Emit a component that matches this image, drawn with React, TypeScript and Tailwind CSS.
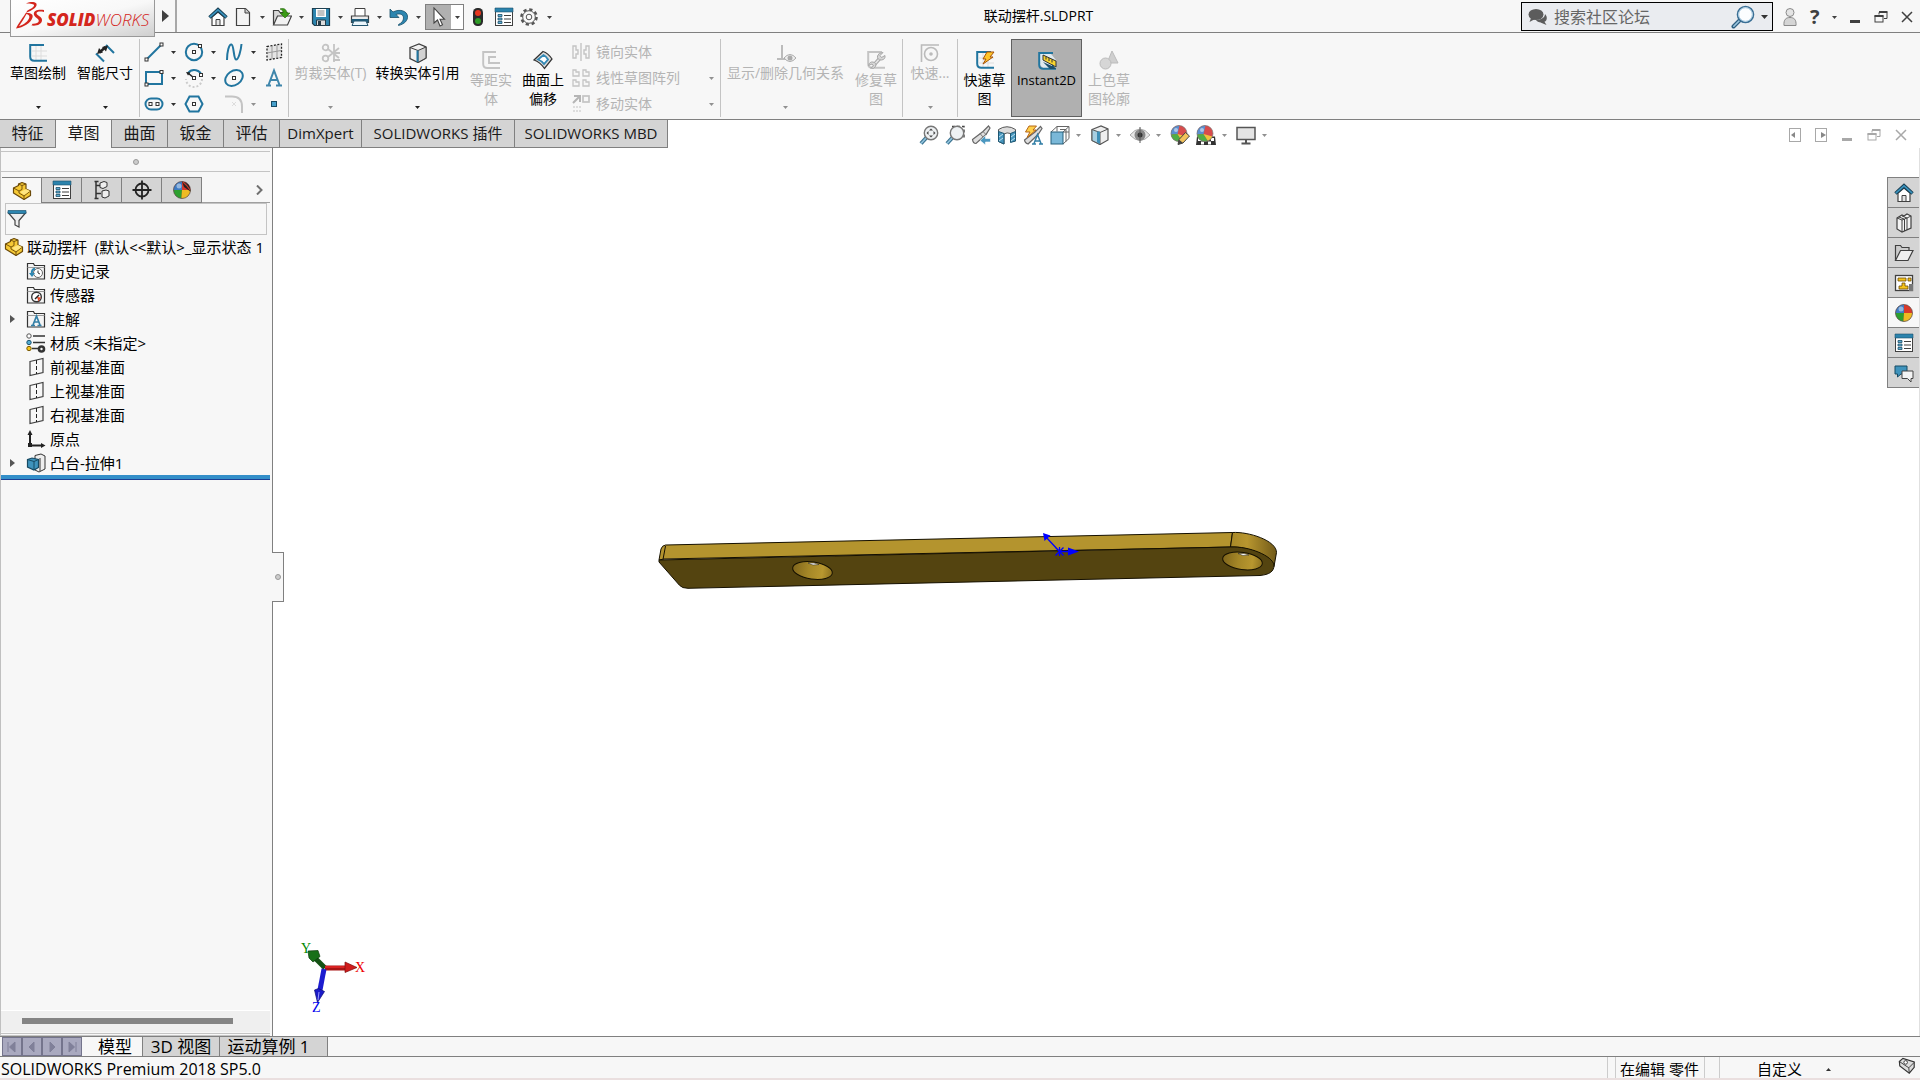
import type { ReactNode } from "react";
import clsx from "clsx";

const BLUE = "#21759f";
const INK = "#404040";
const FADED = "#c4c4c4";

function Icon({ children, className }: { children: ReactNode; className?: string }) {
  return (
    <svg viewBox="0 0 20 20" fill="none" aria-hidden="true" className={clsx("size-5 shrink-0", className)}>
      {children}
    </svg>
  );
}

function Caret({ className = "text-[#404040]" }: { className?: string }) {
  return (
    <svg viewBox="0 0 5 3" fill="currentColor" aria-hidden="true" className={clsx("h-[3px] w-[5px] shrink-0", className)}>
      <path d="M0 0h5L2.500 3z" />
    </svg>
  );
}

/* ---------- shared icons ---------- */

const HomeIcon = () => (
  <Icon>
    <path d="M4 10v8.500h12V10l-6-5z" fill="#fff" stroke={INK} strokeWidth="1.200" />
    <path d="M8 18v-5.500h4V18" fill="#e4e4e4" stroke={INK} />
    <path d="M1.500 10.500L10 2.800l8.500 7.700" stroke="#183e52" strokeWidth="3.600" />
    <path d="M1.800 10.200L10 2.800l8.200 7.400" stroke="#3a93be" strokeWidth="1.600" />
  </Icon>
);

const ListIcon = () => (
  <Icon>
    <rect x="1.500" y="1.500" width="17" height="17" fill="#fff" stroke={INK} />
    <path d="M1 1h18v4H1z" fill="#2b83ad" stroke="#1d4f69" strokeWidth=".6" />
    <path d="M4 7.500h4v2H4zM4 11h4v2H4zM4 14.500h4v2H4z" fill="#5fb0d4" stroke="#1d4f69" strokeWidth=".8" />
    <path d="M10 8.500h7M10 12h7M10 15.500h7" stroke={INK} strokeWidth="1.200" />
  </Icon>
);

const Ball = () => (
  <>
    <circle cx="10" cy="10" r="8.500" fill="#d93a2b" />
    <path d="M10 10V1.500A8.500 8.500 0 0 0 1.500 10z" fill="#3e7cc4" />
    <path d="M10 10H1.500a8.500 8.500 0 0 0 8 8.500z" fill="#2da02f" />
    <path d="M10 10l-.5 8.500a8.500 8.500 0 0 0 9-8.500z" fill="#eebb22" />
    <circle cx="7" cy="6" r="2.500" fill="#fff" opacity=".45" />
    <circle cx="10" cy="10" r="8.500" stroke="#555" strokeWidth=".7" />
  </>
);

/* Same sphere with the larger coloured sectors used in the view toolbar */
const ViewBall = () => (
  <>
    <circle cx="9" cy="8.500" r="8" fill="#d84c4c" />
    <path d="M9.500.5A8 8 0 0 0 1 9.500l6.500-.5z" fill="#5a8fd0" />
    <path d="M1 9.500a8 8 0 0 0 11 6.500L7.500 9z" fill="#4fae45" />
    <path d="M7.500 9l4.500 7q3.500-1.500 4.500-4.500z" fill="#eec53c" />
    <circle cx="6" cy="5" r="2" fill="#fff" opacity=".5" />
    <circle cx="9" cy="8.500" r="8" stroke="#777" strokeWidth=".7" />
  </>
);

const PartIcon = () => (
  <Icon>
    <path d="M1.500 7l5-2.500V3l3.500-1.500 4 1.500v5l4.500 2v4.500l-6.500 4L1.500 12z" fill="#f6c935" stroke="#6b4a09" strokeWidth="1.200" strokeLinejoin="round" />
    <path d="M1.500 7L7 10l3-1.500V4.500L6.500 3M10 4.500L14 3M7 10v2l5 3 6.500-5M12 15v3.500" stroke="#6b4a09" strokeWidth=".9" />
    <path d="M8 11l3-1.500 3-1.500 4 2-6 4z" fill="#ffe681" />
  </Icon>
);

const RestoreIcon = () => (
  <svg viewBox="0 0 14 12" fill="none" stroke="currentColor" aria-hidden="true" className="h-3 w-3.5">
    <path d="M5 3.500V1.500h8v6h-3" />
    <path d="M5 1h8.500" strokeWidth="2" />
    <rect x="1" y="5" width="8" height="6" />
    <path d="M.5 5h9" strokeWidth="2" />
  </svg>
);
const MinimizeIcon = () => (
  <svg viewBox="0 0 12 12" fill="currentColor" aria-hidden="true" className="size-3"><path d="M1 9h10v3H1z" /></svg>
);
const CloseIcon = () => (
  <svg viewBox="0 0 12 12" stroke="currentColor" strokeWidth="1.500" aria-hidden="true" className="size-3"><path d="M1 1l10 10M11 1L1 11" /></svg>
);

/* ---------- title bar ---------- */

function Logo() {
  return (
    <div className="relative z-10 ml-2.5 flex h-[37px] w-[145px] shrink-0 items-start border border-t-0 border-[#999] bg-gradient-to-br from-white via-[#f8f8f8] to-[#cfcfcf] pl-1">
      <svg viewBox="0 0 32 30" fill="#d4261d" aria-hidden="true" className="h-[30px] w-8 shrink-0">
        <path d="M11 3.500C17 1 22.500 2 21.500 5.500 20.500 9 14 11.500 10.500 13c5-.5 8 1 7 4.500C16 23 8 27.500 1 28.500 3 24 8 17.500 12.500 10.500c3-1.500 6-3 6.500-4.700.5-2-3.500-2.300-8-2.300zM11.500 14C9.500 18 6.500 22.500 4 26.200c5-1.500 9.500-5.200 10.300-8.700.4-2-.8-3-2.800-3.500z" />
        <path d="M29 12c-4-.8-7.500-.5-7.500 1.300 0 2.400 6 3.200 5.500 7.200-.5 3.800-5 5.700-10.500 5l1-1.800c3 .2 6-.5 6.300-2.700.3-2.500-5-3.500-5-7.200 0-3.600 5-4.800 10.200-3.800z" />
      </svg>
      <span className="mt-2.5 font-['Open_Sans','Noto_Sans',sans-serif] text-[17px] leading-5 text-[#d4261d] italic">
        <b className="font-extrabold">SOLID</b>
        <span className="font-light">WORKS</span>
      </span>
    </div>
  );
}

const quickTools: { label: string; caret?: boolean; width: string; icon: ReactNode }[] = [
  { label: "主页", width: "w-[25px]", icon: <HomeIcon /> },
  {
    label: "新建", caret: true, width: "w-[39px]",
    icon: (
      <Icon>
        <path d="M3.500 1.500h9l4 4v13h-13z" fill="#f4f4f4" stroke={INK} strokeWidth="1.200" />
        <path d="M12 1.500V6h4.500" fill="#ccc" stroke={INK} />
      </Icon>
    ),
  },
  {
    label: "打开", caret: true, width: "w-[39px]",
    icon: (
      <Icon>
        <path d="M1.500 17.500V3.500h5l1.500 2h7v4" fill="#d8d8d8" stroke={INK} strokeWidth="1.200" />
        <path d="M1.500 18l4-9h14l-4 9z" fill="#f2f2f2" stroke={INK} strokeWidth="1.200" />
        <path d="M8 2c4-1.500 6.500.5 7 4h3l-5 5-5-5h3c0-2-1-3.500-3-4z" fill="#3a9a15" stroke="#226109" strokeWidth=".6" />
      </Icon>
    ),
  },
  {
    label: "保存", caret: true, width: "w-[39px]",
    icon: (
      <Icon>
        <path d="M1.500 1.500h17v17H3.500l-2-2z" fill="#2d86b0" stroke="#1e3f50" strokeWidth="1.200" />
        <path d="M5 2h10v8H5z" fill="#fff" />
        <path d="M6.500 4h7M6.500 6h7M6.500 8h7" stroke="#888" />
        <path d="M5.500 13h9v5.500h-9z" fill="#ddd" stroke="#263d49" />
        <path d="M7 14h3v4.500H7z" fill="#263d49" />
      </Icon>
    ),
  },
  {
    label: "打印", caret: true, width: "w-[39px]",
    icon: (
      <Icon>
        <path d="M5 9V1.500h10V9" fill="#fff" stroke={INK} />
        <path d="M1.500 9h17v6.500h-17z" fill="#ececec" stroke={INK} strokeWidth="1.200" />
        <path d="M1.500 12h17v3.500h-17z" fill="#1f5c7b" />
        <path d="M4 14h12l2 4.500H2z" fill="#eaf5fb" stroke="#23556e" />
      </Icon>
    ),
  },
  {
    label: "撤销", caret: true, width: "w-[39px]",
    icon: (
      <Icon>
        <path d="M1 2v8.500h9L7 7.500c4-1.500 7.500 0 7.500 3.500 0 3-2 5-5 6.500v1c6-1.500 9.500-5 9-9.500C17.800 4 11 1.500 4 5z" fill="#2d86b0" stroke="#1b506b" strokeWidth=".8" />
      </Icon>
    ),
  },
];

function TitleBar() {
  return (
    <header className="flex h-[33px] shrink-0 items-start border-b border-[#808080] bg-[#f7f7f7]">
      <Logo />
      <button aria-label="展开菜单" className="flex h-8 w-[22px] items-center justify-center border-r-2 border-[#a8a8a8]">
        <svg viewBox="0 0 7 12" fill="#404040" aria-hidden="true" className="h-3 w-[7px]"><path d="M0 0l7 6-7 6z" /></svg>
      </button>
      <nav aria-label="快速访问" className="flex h-8 items-center pt-0.5 pl-[31px]">
        {quickTools.map((tool) => (
          <button key={tool.label} aria-label={tool.label} className={clsx("flex items-center gap-1.5", tool.width)}>
            {tool.icon}
            {tool.caret && <span className="pl-px"><Caret /></span>}
          </button>
        ))}
        <button aria-label="选择" className="-ml-[3px] flex h-[26px] w-[39px] items-stretch border border-[#808080] bg-white">
          <span className="flex w-[25px] items-center justify-center bg-[#b0b0b0]">
            <Icon>
              <path d="M5 1v15l3.500-3 2.500 6 2.500-1.200-2.500-5.500h4.500z" fill="#fff" stroke="#444" strokeWidth="1.100" />
            </Icon>
          </span>
          <span className="flex flex-1 items-center justify-center"><Caret /></span>
        </button>
        <button aria-label="重建模型" className="ml-1 w-[23px]">
          <Icon>
            <rect x="5" y="1" width="10" height="18" rx="4.500" fill="#2b2b2b" />
            <circle cx="10" cy="6" r="3" fill="#e8371f" />
            <circle cx="10" cy="14" r="3" fill="#2f9c27" />
          </Icon>
        </button>
        <button aria-label="文件属性" className="ml-[3px] w-[25px]"><ListIcon /></button>
        <button aria-label="选项" className="flex items-center gap-2">
          <Icon>
            <circle cx="10" cy="10" r="7.500" stroke="#555" strokeWidth="2.600" strokeDasharray="3.200 2.690" />
            <circle cx="10" cy="10" r="6.300" fill="#fafafa" stroke="#555" />
            <circle cx="10" cy="10" r="2.800" stroke="#555" />
          </Icon>
          <Caret />
        </button>
      </nav>
      <h1 className="flex-1 pl-1 text-center text-sm leading-8 text-black">联动摆杆.SLDPRT</h1>
      <div className="mt-0.5 flex h-[29px] w-[252px] items-center border border-black bg-[#eaecf0] px-1.5">
        <Icon>
          <ellipse cx="8" cy="7.500" rx="7.500" ry="5.500" fill="#5c5c5c" />
          <path d="M3 11l-1.500 4L7 12zM16 14l2.500 4-6-2.500z" fill="#5c5c5c" />
          <path d="M17 7c3 3 2.500 8-3 8.500-3 .2-5-.8-6-2.500 5 0 9-2.500 9-6z" fill="#5c5c5c" />
        </Icon>
        <input
          aria-label="搜索社区论坛"
          placeholder="搜索社区论坛"
          className="ml-1.5 w-0 flex-1 bg-transparent text-base leading-5 outline-none placeholder:text-[#666]"
        />
        <button aria-label="搜索" className="flex items-center gap-1.5">
          <svg viewBox="0 0 24 24" fill="none" aria-hidden="true" className="size-6">
            <path d="M9.500 14.500L2.500 21.500" stroke="#2f5f80" strokeWidth="4" strokeLinecap="round" />
            <path d="M9 15L2.800 21.200" stroke="#9cc7e0" strokeWidth="1.600" strokeLinecap="round" />
            <circle cx="14.500" cy="9.500" r="8" fill="#fbfdff" stroke="#3a6f95" strokeWidth="1.600" />
            <circle cx="14.500" cy="9.500" r="6.800" stroke="#a9cbe2" />
          </svg>
          <svg viewBox="0 0 7 4" fill="#333" aria-hidden="true" className="-mr-0.5 h-1 w-[7px]"><path d="M0 0h7L3.500 4z" /></svg>
        </button>
      </div>
      <div className="flex h-8 w-[147px] items-center pt-0.5 pl-[7px] text-[#404040]">
        <button aria-label="登录">
          <Icon>
            <path d="M4 18.500c-.5-6 2-8 6-8s6.500 2 6 8z" fill="#d5d5d5" stroke="#8a8a8a" />
            <circle cx="10" cy="5.500" r="4" fill="#e4e4e4" stroke="#8a8a8a" />
          </Icon>
        </button>
        <button aria-label="帮助" className="ml-2.5 flex items-center gap-3 text-xl leading-6 font-bold">
          ?<Caret />
        </button>
        <button aria-label="最小化" className="ml-auto"><MinimizeIcon /></button>
        <button aria-label="还原" className="ml-[13px]"><RestoreIcon /></button>
        <button aria-label="关闭" className="mr-[7px] ml-[13px]"><CloseIcon /></button>
      </div>
    </header>
  );
}

/* ---------- command ribbon ---------- */

const SketchFrame = ({ color = BLUE }: { color?: string }) => (
  <path d="M16 2H2.200v11.800q0 4 4 4H19" stroke={color} strokeWidth="2" />
);

const Handle = ({ x, y }: { x: number; y: number }) => (
  <rect x={x - 1.500} y={y - 1.500} width="3" height="3" fill="#fff" stroke="#333" />
);

type RibbonButtonProps = {
  icon: ReactNode;
  lines: string[];
  width: string;
  caret?: boolean;
  disabled?: boolean;
  pressed?: boolean;
};

function RibbonButton({ icon, lines, width, caret, disabled, pressed }: RibbonButtonProps) {
  return (
    <button
      disabled={disabled}
      aria-pressed={pressed}
      className={clsx(
        "flex h-[78px] shrink-0 flex-col items-center leading-[19px] whitespace-nowrap",
        width,
        caret ? "pt-1" : "pt-[11px]",
        disabled ? "text-[#b4b4b4]" : "text-black",
        pressed ? "border border-[#606060] bg-[#b0b0b0] text-[13px]" : "text-sm",
      )}
    >
      {icon}
      <span>{lines.map((line) => <span key={line} className="block">{line}</span>)}</span>
      {caret && <span className="mt-auto mb-2"><Caret className={disabled ? "text-[#909090]" : "text-[#202020]"} /></span>}
    </button>
  );
}

const Divider = () => <div className="h-[78px] w-px shrink-0 bg-[#c4c4c4]" />;

const sketchTools: { label: string; caret?: boolean; faded?: boolean; art: ReactNode }[] = [
  { label: "直线", caret: true, art: <><path d="M2 18L18 2" stroke={BLUE} strokeWidth="2" /><Handle x={2.500} y={17.500} /><Handle x={17.500} y={2.500} /></> },
  { label: "圆", caret: true, art: <><circle cx="10" cy="10" r="8.200" stroke={BLUE} strokeWidth="2" /><Handle x={10} y={10} /><Handle x={16} y={4} /></> },
  { label: "样条曲线", caret: true, art: <path d="M3 18C3 10 5 2 7.500 2.500S9.500 17 12 17.500 17 8 17.500 2" stroke={BLUE} strokeWidth="2" /> },
  { label: "基准面", art: <><path d="M3 4.500L17.500 2v13.500L3 18z" fill="#e4e4e4" stroke="#222" strokeWidth="1.300" strokeDasharray="2 1.500" /><path d="M8 4v13M13 3v13M3 11l14-2.500" stroke="#999" /></> },
  { label: "边角矩形", caret: true, art: <><rect x="2" y="4" width="16" height="12" stroke={BLUE} strokeWidth="2" /><Handle x={2.500} y={16.500} /><Handle x={17.500} y={4} /></> },
  { label: "圆弧", caret: true, art: <><path d="M4 5a8 8 0 0 1 14 3" stroke={BLUE} strokeWidth="2" /><path d="M18 11a8 8 0 0 1-16 0" stroke="#ccc" strokeWidth="2" strokeDasharray="2 2" /><path d="M4 5l6 5" stroke="#222" strokeWidth="1.500" /><path d="M2 4l4.500.5L4 7.500z" fill="#222" /><Handle x={10} y={10} /><Handle x={17} y={7} /></> },
  { label: "椭圆", caret: true, art: <><ellipse cx="10" cy="10" rx="9.500" ry="7" transform="rotate(-35 10 10)" stroke={BLUE} strokeWidth="2" /><Handle x={10} y={10} /></> },
  { label: "文字", art: <path d="M2 17.500h5M12 17.500h6M4.500 17L10 2.500 15.500 17M6.500 12h7" stroke="#3f86ab" strokeWidth="2" /> },
  { label: "直槽口", caret: true, art: <><rect x="1.500" y="4.500" width="17" height="11" rx="5.500" stroke={BLUE} strokeWidth="2" /><Handle x={6.500} y={10} /><Handle x={13.500} y={10} /></> },
  { label: "多边形", art: <><path d="M5.500 2.500h9L18.500 10l-4 7.500h-9L1.500 10z" stroke={BLUE} strokeWidth="2" /><Handle x={10} y={10} /></> },
  { label: "绘制圆角", caret: true, faded: true, art: <><path d="M1 2.500h7q10 0 10 10V19" stroke={FADED} strokeWidth="2" /><path d="M8 8l4 4M12 8l-4 4" stroke="#ddd" /></> },
  { label: "点", art: <rect x="7.500" y="7.500" width="5" height="5" fill="#47a0cc" stroke="#174a63" /> },
];

const entityTools: { label: string; caret?: boolean; art: ReactNode }[] = [
  { label: "镜向实体", art: <path d="M10 1v18M2 4h3v4h2v4H5v4H2zM18 4h-3v4h-2v4h2v4h3z" stroke={FADED} strokeWidth="1.400" /> },
  { label: "线性草图阵列", caret: true, art: <path d="M2 2h3v2h3v4H2zM12 2h3v2h3v4h-6zM2 12h3v2h3v4H2zM12 12h3v2h3v4h-6z" stroke={FADED} strokeWidth="1.300" /> },
  { label: "移动实体", caret: true, art: <><rect x="12" y="2" width="6" height="6" stroke={FADED} strokeWidth="1.700" /><path d="M2 9l6-6M3 2h6v6" stroke="#b5b5b5" strokeWidth="2" /><path d="M2 13h8M2 17h8" stroke="#ddd" strokeWidth="2" strokeDasharray="2 1" /></> },
];

function Ribbon() {
  return (
    <section aria-label="草图命令" className="flex h-[87px] shrink-0 items-start border-b border-[#808080] bg-[#f7f7f7] pt-1.5">
      <RibbonButton
        caret width="w-[76px]" lines={["草图绘制"]}
        icon={<Icon><path d="M8 3v14M13 3v14M4 8h15M4 13h15" stroke="#ddd" /><SketchFrame /></Icon>}
      />
      <RibbonButton
        caret width="w-[58px] mr-[5px]" lines={["智能尺寸"]}
        icon={
          <Icon>
            <path d="M1 10.500l8 8M11 2l8 8" stroke={BLUE} strokeWidth="2" />
            <path d="M4.500 9.500L10.500 4" stroke="#222" strokeWidth="2.500" />
            <path d="M2 11l2-6 4 4.500zM13 2.500l-2 6L7 4z" fill="#222" />
          </Icon>
        }
      />
      <Divider />
      <div className="grid w-[148px] shrink-0 grid-cols-[40px_40px_40px_28px] grid-rows-[26px_26px_26px] pl-1">
        {sketchTools.map((tool) => (
          <button key={tool.label} aria-label={tool.label} disabled={tool.faded} className="flex items-center gap-[7px]">
            <Icon>{tool.art}</Icon>
            {tool.caret && <Caret className={tool.faded ? "text-[#909090]" : "text-[#303030]"} />}
          </button>
        ))}
      </div>
      <Divider />
      <RibbonButton
        caret disabled width="w-[83px]" lines={["剪裁实体(T)"]}
        icon={
          <Icon>
            <circle cx="4.500" cy="4.500" r="2.800" stroke={FADED} strokeWidth="1.800" />
            <circle cx="4.500" cy="15.500" r="2.800" stroke={FADED} strokeWidth="1.800" />
            <path d="M7 6l11 9M7 14l11-9M13 1v18M12 10h7M12 17h7" stroke={FADED} strokeWidth="1.800" />
          </Icon>
        }
      />
      <RibbonButton
        caret width="w-[91px]" lines={["转换实体引用"]}
        icon={
          <Icon>
            <path d="M2 4.500L11 1l7 3v11l-8 4.500-8-4z" fill="#f2f2f2" stroke={INK} strokeWidth="1.300" />
            <path d="M10 7.500L18 4v11l-8 4.500z" fill="#d2d2d2" stroke={INK} />
            <path d="M2 4.500l8 3" stroke={INK} />
            <path d="M9.500 7.500v11.500" stroke={BLUE} strokeWidth="2" />
          </Icon>
        }
      />
      <RibbonButton
        disabled width="w-14" lines={["等距实", "体"]}
        icon={<Icon><path d="M15 2H2.200v12q0 4 4 4H19M15 7H8v6h11" stroke={FADED} strokeWidth="1.900" /></Icon>}
      />
      <RibbonButton
        width="w-12" lines={["曲面上", "偏移"]}
        icon={
          <Icon>
            <path d="M1 10L10 1.500Q15 3 19 9l-7.500 9.500Q7 12 1 10z" fill="#dcdcdc" stroke="#333" strokeWidth="1.300" />
            <path d="M5 9.500l5.500-4.500q3 1.500 4.500 4.500l-4 4.500Q9 11 5 9.500z" fill="#fff" stroke="#3388b4" strokeWidth="1.800" />
          </Icon>
        }
      />
      <div className="grid w-[153px] shrink-0 grid-rows-[26px_26px_26px] pr-1.5 pl-1 text-sm text-[#b4b4b4]">
        {entityTools.map((tool) => (
          <button key={tool.label} disabled className="flex items-center">
            <Icon>{tool.art}</Icon>
            <span className="ml-[5px] flex-1 text-left">{tool.label}</span>
            {tool.caret && <Caret className="text-[#909090]" />}
          </button>
        ))}
      </div>
      <Divider />
      <RibbonButton
        caret disabled width="w-[129px]" lines={["显示/删除几何关系"]}
        icon={
          <Icon>
            <path d="M6 2v14M1 16h9" stroke="#bbb" strokeWidth="2" />
            <path d="M8 15q6-7 12 0-6 7-12 0z" fill="#f0f0f0" stroke="#aaa" />
            <circle cx="14" cy="15" r="2.500" fill="#aaa" />
          </Icon>
        }
      />
      <RibbonButton
        disabled width="w-[52px]" lines={["修复草", "图"]}
        icon={
          <Icon>
            <SketchFrame color={FADED} />
            <path d="M7.500 15.500L15 7" stroke="#a8a8a8" strokeWidth="3.600" />
            <path d="M7.500 15.500L15 7" stroke="#e6e6e6" strokeWidth="1.600" />
            <path d="M17 2.500l-3 3 1.500 2 3.500-2q.5 4-3.500 4.500-4.500 0-4-4 .8-3.500 5.500-3.500zM4.500 18l3-2-1.500-2-3.500 1.500q1-4 4.500-3.500 4 1 2.500 4.500-1.500 3-5 1.500z" fill="#d6d6d6" stroke="#a8a8a8" />
          </Icon>
        }
      />
      <Divider />
      <RibbonButton
        caret disabled width="w-[54px]" lines={["快速..."]}
        icon={<Icon><path d="M1.500 19V2H19" stroke="#bbb" strokeWidth="1.600" /><circle cx="11" cy="11" r="6.500" stroke="#bbb" strokeWidth="1.600" /><circle cx="11" cy="11" r="1.800" fill="#bbb" /></Icon>}
      />
      <Divider />
      <RibbonButton
        width="w-[53px]" lines={["快速草", "图"]}
        icon={
          <Icon>
            <path d="M8 3v14M13 3v14M4 8h15M4 13h15" stroke="#ddd" /><SketchFrame />
            <path d="M12 2h7l-4 5h3L8 14l3-5H8z" fill="#ffc629" stroke="#a65208" />
          </Icon>
        }
      />
      <RibbonButton
        pressed width="w-[71px]" lines={["Instant2D"]}
        icon={
          <Icon>
            <path d="M3 3h11l5 6v8H6l-3-3z" fill="#dfeaf0" />
            <SketchFrame />
            <path d="M6 4l13 6v6L6 9z" fill="#f9d52e" stroke="#333" />
            <path d="M9 5.500v3M12 7v3M15 8.500v3" stroke="#333" />
            <path d="M6 11l9 4v-2l4 5H13z" fill="#1c4f6b" />
          </Icon>
        }
      />
      <RibbonButton
        disabled width="w-[54px]" lines={["上色草", "图轮廓"]}
        icon={<Icon><path d="M13 1l6 12H8z" fill="#cfcfcf" stroke="#bbb" /><circle cx="6.500" cy="13.500" r="5.500" fill="#d6d6d6" stroke="#bbb" /></Icon>}
      />
    </section>
  );
}

/* ---------- command tabs and view toolbar ---------- */

const commandTabs = [
  { label: "特征", width: "w-14 text-base" },
  { label: "草图", width: "w-14 text-base" },
  { label: "曲面", width: "w-14 text-base" },
  { label: "钣金", width: "w-14 text-base" },
  { label: "评估", width: "w-14 text-base" },
  { label: "DimXpert", width: "w-[82px] text-[15px]" },
  { label: "SOLIDWORKS 插件", width: "w-[153px] text-[15px]" },
  { label: "SOLIDWORKS MBD", width: "w-[153px] text-[15px]" },
];

const Lens = () => (
  <>
    <path d="M8 12l-6 6.500" stroke="#39718e" strokeWidth="4" />
    <path d="M7.500 12.500L2 18.500" stroke="#8fc3de" strokeWidth="1.800" />
    <circle cx="12" cy="8" r="6.700" fill="#eef1f3" stroke="#777" strokeWidth="1.400" />
  </>
);

const viewTools: { label: string; width: string; caret?: boolean; icon: ReactNode }[] = [
  { label: "整屏显示全图", width: "w-[26px]", icon: <Icon><Lens /><path d="M12 3.500l2 2h-4zM12 12.500l2-2h-4zM7.500 8l2-2v4zM16.500 8l-2-2v4z" fill="#444" /></Icon> },
  { label: "局部放大", width: "w-[26px]", icon: <Icon><path d="M7 1.500h12v13" stroke="#444" strokeWidth="1.400" strokeDasharray="3 2" /><Lens /></Icon> },
  { label: "上一视图", width: "w-[26px]", icon: <Icon><path d="M1.500 14.500L12 6.500l5.500-5.500L19 3l-4 6.500L5 18.500q-3 0-3.500-4z" fill="#dedede" stroke="#666" strokeWidth="1.200" /><path d="M12 6.500l3 3M9 8.500l3 3.500" stroke="#777" /><path d="M19.500 13.500h-5v-3L9 15.500l5.500 4.500v-3h5z" fill="#4c98c0" stroke="#fff" strokeWidth=".6" /></Icon> },
  { label: "剖面视图", width: "w-[26px]", icon: <Icon><path d="M1.500 4.500q8.500-5.500 17 0V16l-5 .5V8.500Q10 7 7 9v10l-5.500-2.500z" fill="#dcdcdc" stroke="#555" /><path d="M1.500 6.500L7 8.500V19l-5.500-2.500zM13.500 8.500l5-2V16l-5 1.500z" fill="#4696bd" stroke="#1d5672" /><path d="M2 12l4-3M2 16l4-3M14 12l4-3M14 16l4-3" stroke="#bfe0ef" /></Icon> },
  { label: "动态注解视图", width: "w-[27px]", icon: <Icon><path d="M1.500 15L12 7l5.500-5.500L19 3.500l-4 6L5 19q-3-.5-3.500-4z" fill="#dedede" stroke="#666" strokeWidth="1.200" /><path d="M6 1h7.500L10 5h3l-9 7.500 3-5.500H2.500z" fill="#ffd04a" stroke="#b56617" /><path d="M9 19h4M16 19h4M11 18.500l3.500-9 3.500 9M12 16h5" stroke="#337fa6" strokeWidth="1.500" /></Icon> },
  { label: "视图定向", width: "w-10", caret: true, icon: <Icon><path d="M1 7l6-5.500h12v12L13 19M7 1.500v5M13 7l6-5.500M7 7v12M13 7h6M10 4.500h6v12" stroke="#666" /><rect x="1" y="7" width="12" height="12" fill="#7ab8d8" stroke="#27607d" /></Icon> },
  { label: "显示样式", width: "w-10", caret: true, icon: <Icon><path d="M2 4.500L11 1l7 3v11l-8 4.500-8-4z" fill="#eee" stroke="#555" strokeWidth="1.200" /><path d="M2 4.500l8 3v12l-8-4z" fill="#a7cfe2" stroke="#555" /><path d="M7 6.500h3V19l-3-1.500z" fill="#3e8fb7" /><path d="M10 7.500L18 4" stroke="#555" /></Icon> },
  { label: "隐藏/显示项目", width: "w-10", caret: true, icon: <Icon><path d="M0 10q10-12 20 0-10 11-20 0z" fill="#e8e8e8" stroke="#aaa" /><circle cx="10" cy="10" r="5.500" fill="#888" /><circle cx="10" cy="10" r="2.500" fill="#333" /><path d="M10 2v16" stroke="#555" /></Icon> },
  { label: "编辑外观", width: "w-[26px]", icon: <Icon><ViewBall /><path d="M8 19.500l1-5L15.500 7.500l4 3.500-6.500 7z" fill="#f2c25b" stroke="#444" /><path d="M8 19.500l1-5 4 3.500z" fill="#444" /></Icon> },
  { label: "应用布景", width: "w-10", caret: true, icon: <Icon><path d="M1 11.500h18l1 8.500H0z" fill="#333" /><path d="M2 13h3v3H2zM15 13h3v3h-3zM5 16.500h3v3H5zM12 16.500h3v3h-3z" fill="#fff" /><ViewBall /></Icon> },
  { label: "视图设定", width: "w-7", caret: true, icon: <Icon><rect x="1" y="2.500" width="18" height="12" fill="#e4e4e4" stroke="#555" strokeWidth="1.500" /><path d="M10 15v3M5.500 18.500h9" stroke="#555" strokeWidth="2" /></Icon> },
];

function CommandTabs() {
  return (
    <div className="flex h-7 shrink-0 bg-white">
      <div role="tablist" aria-label="命令管理器" className="flex shrink-0">
        {commandTabs.map((tab) => (
          <button
            key={tab.label}
            role="tab"
            aria-selected={tab.label === "草图"}
            className={clsx(
              "border-r border-[#808080] pb-0.5 leading-6 whitespace-nowrap text-[#1a1a1a]",
              tab.width,
              tab.label === "草图" ? "bg-[#f7f7f7]" : "border-b bg-[#d4d4d4]",
            )}
          >
            {tab.label}
          </button>
        ))}
      </div>
      <div className="ml-[251px] flex shrink-0 items-center pt-0.5">
        {viewTools.map((tool) => (
          <button key={tool.label} aria-label={tool.label} className={clsx("flex shrink-0 items-center gap-1.5", tool.width)}>
            {tool.icon}
            {tool.caret && <Caret className="text-[#909090]" />}
          </button>
        ))}
      </div>
      <div className="mr-[13px] ml-auto flex items-center gap-3.5 pt-0.5 text-[#a8a8a8]">
        <button aria-label="向左展开">
          <svg viewBox="0 0 12 14" fill="none" stroke="currentColor" aria-hidden="true" className="h-3.5 w-3"><rect x=".5" y=".5" width="11" height="13" /><path d="M6 4v6L2 7z" fill="#888" stroke="none" /></svg>
        </button>
        <button aria-label="向右展开">
          <svg viewBox="0 0 12 14" fill="none" stroke="currentColor" aria-hidden="true" className="h-3.5 w-3"><rect x=".5" y=".5" width="11" height="13" /><path d="M6 4v6l5-3z" fill="#888" stroke="none" /></svg>
        </button>
        <button aria-label="最小化文档"><MinimizeIcon /></button>
        <button aria-label="还原文档"><RestoreIcon /></button>
        <button aria-label="关闭文档"><CloseIcon /></button>
      </div>
    </div>
  );
}

/* ---------- feature tree ---------- */

const TreeFolder = ({ children }: { children: ReactNode }) => (
  <Icon>
    <path d="M1.500 18V2.500h6l1 2h10V18z" fill="#f4f4f4" stroke="#333" strokeWidth="1.200" />
    <path d="M1.500 6.500h17" stroke="#999" />
    {children}
  </Icon>
);

const PlaneIcon = () => (
  <Icon><path d="M4 4.500l13-3v14l-13 3z" stroke={INK} strokeWidth="1.200" /><path d="M10.500 3v14" stroke="#222" strokeDasharray="4 2" /></Icon>
);

const treeItems: { label: string; expandable?: boolean; icon: ReactNode }[] = [
  { label: "历史记录", icon: <TreeFolder><circle cx="12" cy="12" r="4.500" fill="#fff" stroke="#666" /><path d="M12 9.500V12l2 1" stroke="#333" /><path d="M9 7.500q-4 1.500-3 5.500" stroke="#2d86b0" strokeWidth="2" /><path d="M3 12h6l-3 4z" fill="#2d86b0" /></TreeFolder> },
  { label: "传感器", icon: <TreeFolder><circle cx="10.500" cy="12" r="4.800" fill="#fff" stroke="#333" strokeWidth="1.400" /><path d="M11 12l4 .5-2.500 4z" fill="#e64422" /><path d="M9 14l4-4" stroke="#222" strokeWidth="1.500" /></TreeFolder> },
  { label: "注解", expandable: true, icon: <TreeFolder><path d="M5 16.500h4M11.500 16.500h4M7 16l3.500-9L14 16M8 13h5" stroke="#337fa6" strokeWidth="1.700" /></TreeFolder> },
  { label: "材质 <未指定>", icon: <Icon><path d="M7 3h12M7 9.500h12M6 15.500h7" stroke="#333" strokeWidth="1.700" /><circle cx="3" cy="3" r="2.200" fill="#fff" stroke="#555" /><circle cx="3" cy="9.500" r="2.200" fill="#53abd3" stroke="#1d5672" /><circle cx="3" cy="15.500" r="2.200" fill="#f6c419" stroke="#7a5a05" /><circle cx="15.500" cy="16" r="2.500" stroke="#333" strokeWidth="2.600" /></Icon> },
  { label: "前视基准面", icon: <PlaneIcon /> },
  { label: "上视基准面", icon: <PlaneIcon /> },
  { label: "右视基准面", icon: <PlaneIcon /> },
  { label: "原点", icon: <Icon><path d="M4 4v12.500h12" stroke="#222" strokeWidth="2" /><path d="M4 1l2.500 5h-5zM19.500 16.500L15 14v5z" fill="#222" /><path d="M2 14h4v4H2z" fill="#222" /></Icon> },
  { label: "凸台-拉伸1", expandable: true, icon: <Icon><path d="M9 2.500l6-1.500 4 2v13l-6 3-4-2z" fill="#eee" stroke="#333" /><path d="M14 5v13" stroke="#333" /><path d="M1.500 6.500L6 5l6.500 1.500v8L8 17l-6.500-3z" fill="#3f93bc" stroke="#174a63" strokeWidth="1.200" /><path d="M1.500 6.500L8 8.500l4.500-2M8 8.500V17" stroke="#174a63" /></Icon> },
];

const managerTabs: { label: string; icon: ReactNode }[] = [
  { label: "特征管理器设计树", icon: <PartIcon /> },
  { label: "属性管理器", icon: <ListIcon /> },
  { label: "配置管理器", icon: <Icon><path d="M4 1.500v17M4 5.500h5M4 13.500h5M2.500 1.500h4M2.500 18.500h4" stroke="#333" strokeWidth="1.500" /><path d="M8 3l4-1.500 3 1v4l-4 2-3-1zM10 11l4-1 3 1v5l-4 2-3-1z" fill="#eee" stroke="#333" /></Icon> },
  { label: "尺寸专家管理器", icon: <Icon><circle cx="10" cy="10" r="6.500" stroke="#222" strokeWidth="1.800" /><path d="M10 .5v19M.5 10h19" stroke="#222" strokeWidth="1.800" /></Icon> },
  { label: "外观管理器", icon: <Icon><Ball /><path d="M10 1.500q8 1 8.500 10L12 7z" fill="#222" /><path d="M11 2q4 3 7 8" stroke="#c83a2b" strokeWidth="1.200" /></Icon> },
];

function FeaturePanel() {
  return (
    <aside className="flex w-[273px] shrink-0 flex-col border-r border-l border-r-[#808080] border-l-[#c0c0c0] bg-[#f7f7f7] pr-0.5">
      <div className="mt-[3px] flex h-[21px] shrink-0 items-center justify-center border-y border-[#c4c4c4]">
        <span className="size-1.5 rounded-full border border-[#999] bg-[#ccc]" />
      </div>
      <div role="tablist" aria-label="管理器" className="mt-[5px] flex h-[26px] shrink-0 pl-px">
        {managerTabs.map((tab, index) => (
          <button
            key={tab.label}
            role="tab"
            aria-label={tab.label}
            aria-selected={index === 0}
            className={clsx(
              "flex w-10 items-center justify-center border-t border-r border-[#808080]",
              index > 0 && "border-b bg-[#d4d4d4]",
            )}
          >
            {tab.icon}
          </button>
        ))}
        <button aria-label="更多管理器" className="flex flex-1 items-center justify-end border-b border-[#a0a0a0] pr-[7px]">
          <svg viewBox="0 0 7 10" fill="none" stroke="#707070" strokeWidth="2" aria-hidden="true" className="h-2.5 w-[7px]"><path d="M1 .5L5.500 5 1 9.500" /></svg>
        </button>
      </div>
      <label className="mr-[3px] ml-1 flex h-8 shrink-0 items-center border border-[#c4c4c4] pl-px">
        <Icon>
          <path d="M1.500 4h17L12 11.500V18l-4-2v-4.500z" fill="#eee" stroke="#444" strokeWidth="1.200" />
          <path d="M1 1.500h18v3H1z" fill="#2d86b0" stroke="#1d5672" strokeWidth=".7" />
        </Icon>
        <input aria-label="过滤设计树" className="w-0 flex-1 bg-transparent text-[15px] outline-none" />
      </label>
      <div className="flex h-6 shrink-0 items-center overflow-hidden pl-[3px] text-[15px] whitespace-pre text-black">
        <PartIcon />
        <span className="ml-[3px]">{"联动摆杆  (默认<<默认>_显示状态 1"}</span>
      </div>
      <ul className="text-[15px] leading-6 text-black">
        {treeItems.map((item) => (
          <li key={item.label} className="flex h-6 items-center">
            <span className="flex w-[25px] justify-start pl-[9px]">
              {item.expandable && (
                <svg viewBox="0 0 5 8" fill="#555" aria-hidden="true" className="h-2 w-[5px]"><path d="M0 0l5 4-5 4z" /></svg>
              )}
            </span>
            {item.icon}
            <span className="ml-1">{item.label}</span>
          </li>
        ))}
      </ul>
      <div className="h-[5px] shrink-0 border-b border-[#1c3f94] bg-[#338fc9]" />
      <div className="mt-auto h-[22px] shrink-0 border-t border-white bg-[#efefef] pt-[7px]">
        <div className="mr-[37px] ml-[21px] h-1.5 bg-[#848484]" />
      </div>
      <div className="mt-px h-[3px] shrink-0 border-y border-[#c4c4c4]" />
    </aside>
  );
}

/* ---------- graphics area ---------- */

function PartModel() {
  return (
    <svg viewBox="650 520 640 80" role="img" aria-label="联动摆杆模型" className="absolute top-[372px] left-[377px] h-20 w-[640px]">
      <defs>
        <linearGradient id="round-end" x1="1231" x2="1277" y1="0" y2="0" gradientUnits="userSpaceOnUse">
          <stop offset="0" stopColor="#a88928" />
          <stop offset=".35" stopColor="#b8962f" />
          <stop offset="1" stopColor="#705918" />
        </linearGradient>
        <linearGradient id="bore">
          <stop offset="0" stopColor="#80661c" />
          <stop offset=".4" stopColor="#a58727" />
          <stop offset=".75" stopColor="#b8972f" />
          <stop offset="1" stopColor="#8d711f" />
        </linearGradient>
      </defs>
      <g stroke="#151000" strokeLinejoin="round">
        <path d="M659 560l2-11q1-3.500 4.500-4L1232.500 532.500 1230.500 547 664 559z" fill="#b4942e" />
        <path d="M1232.500 532.500c16-1 44 8 44 20l-2.500 14c-5-12-27-20-43.500-19.500z" fill="url(#round-end)" />
        <path d="M659 560L1230.500 547c19-1 42 9 43.500 18 0 7-5 9.500-14 10.500L688 588.300q-6 0-8.500-3L659 562z" fill="#544410" />
        <path d="M665.500 546l-2.500 13.500" />
        <ellipse cx="812.500" cy="570.500" rx="20" ry="8.500" transform="rotate(8 812.500 570.500)" fill="url(#bore)" />
        <ellipse cx="1242.500" cy="561" rx="20" ry="8.500" transform="rotate(8 1242.500 561)" fill="url(#bore)" />
      </g>
      <path d="M808 563h6l5 1.500-6 .5zM1238 553.500h6l5 1.500-6 .5z" fill="#fff" stroke="#222" strokeWidth=".5" />
      <path d="M1045 536l14.500 15.500H1070M1055.500 547.500l8 8M1063.500 547.500l-8 8M1059.500 547v9" fill="none" stroke="#00f" strokeWidth="1.300" />
      <path d="M1043 533l7.500 2.500-6 5.500zM1079 551.500l-11-4v8z" fill="#00f" />
    </svg>
  );
}

function AxisTriad() {
  return (
    <svg viewBox="300 938 70 80" role="img" aria-label="坐标轴" className="absolute bottom-[18px] left-[27px] h-20 w-[70px]">
      <path d="M325 968l-10-10" stroke="#145214" strokeWidth="5" />
      <path d="M308 951l10-.5 2 6-7 5.500-4-4z" fill="#187018" stroke="#0c3a0c" strokeWidth=".7" />
      <path d="M325 968h21" stroke="#a81414" strokeWidth="5" />
      <path d="M325 967h21" stroke="#d92222" strokeWidth="2" />
      <path d="M345 962l12 5.500-12 5z" fill="#d01b1b" stroke="#7c0b0b" strokeWidth=".7" />
      <path d="M324 969l-4 21" stroke="#1c1ccf" strokeWidth="5" />
      <path d="M314.500 990l4-1.500 6 3-7 11z" fill="#1a1ac9" stroke="#0a0a70" strokeWidth=".7" />
      <path d="M319 992l-1 8" stroke="#9a9aff" />
      <g className="font-['Liberation_Serif',serif] text-[14px]">
        <text x="301" y="953" fill="#080">Y</text>
        <text x="355" y="972" fill="#e00">X</text>
        <text x="312" y="1012" fill="#00e">Z</text>
      </g>
    </svg>
  );
}

const taskTabs: { label: string; active?: boolean; icon: ReactNode }[] = [
  { label: "SOLIDWORKS 资源", icon: <HomeIcon /> },
  { label: "设计库", icon: <Icon><path d="M3 5l5-3 2 1 3-2 4 2v12l-9 4-5-3z" fill="#f4f4f4" stroke={INK} strokeWidth="1.200" /><path d="M3 5l5 2v12M8 7l2.500-1v12M10.500 6L13 5v12M13 5l4-2M5 4l5 2M8 3l5 2" stroke={INK} /></Icon> },
  { label: "文件探索器", icon: <Icon><path d="M1.500 17.500V2.500h5l1.500 2h7v3" fill="#ccc" stroke={INK} strokeWidth="1.200" /><path d="M1.500 17.500l5-10H19l-5 10z" fill="#eee" stroke={INK} strokeWidth="1.200" /></Icon> },
  { label: "视图调色板", icon: <Icon><rect x="1.500" y="2.500" width="17" height="15" fill="#fff" stroke={INK} strokeWidth="1.300" /><path d="M4 5h8v3H4zM14 5h3v3h-3zM8 10h3v3h3v3H5v-3h3z" fill="#f6c419" stroke="#6b4a09" strokeWidth=".8" /><path d="M15 11h4v7h-4z" fill="#777" /></Icon> },
  { label: "外观、布景和贴图", active: true, icon: <Icon><Ball /></Icon> },
  { label: "自定义属性", icon: <ListIcon /> },
  { label: "SOLIDWORKS 论坛", icon: <Icon><path d="M1 3h12v8H7l-3.500 3v-3H1z" fill="#3f93bc" stroke="#174a63" /><path d="M8 8h11v7.500h-2V19l-3.500-3.500H8z" fill="#f4f4f4" stroke="#444" /></Icon> },
];

function GraphicsArea() {
  return (
    <main className="relative flex min-w-0 flex-1 items-start justify-between border-r border-[#e0e0e0] bg-white">
      <button aria-label="折叠设计树" className="mt-[404px] -ml-px flex h-[50px] w-3 items-center justify-center border border-l-0 border-[#808080] bg-[#f7f7f7]">
        <span className="size-1.5 rounded-full border border-[#999] bg-[#ccc]" />
      </button>
      <PartModel />
      <AxisTriad />
      <nav aria-label="任务窗格" className="mt-[29px] flex w-8 flex-col border-t border-l border-[#808080]">
        {taskTabs.map((tab) => (
          <button
            key={tab.label}
            aria-label={tab.label}
            className={clsx("flex h-[30px] items-center justify-center border-b border-[#808080]", tab.active ? "bg-[#f7f7f7]" : "bg-[#d4d4d4]")}
          >
            {tab.icon}
          </button>
        ))}
      </nav>
    </main>
  );
}

/* ---------- bottom bars ---------- */

const pagerButtons = [
  { label: "第一个", d: "M3 2v10M10 2v10L4.500 7z" },
  { label: "上一个", d: "M9 2v10L4 7z" },
  { label: "下一个", d: "M5 2v10l5-5z" },
  { label: "最后一个", d: "M11 2v10M4 2v10L9.500 7z" },
];

const sheetTabs = [
  { label: "模型", width: "w-[61px] pl-1.5" },
  { label: "3D 视图", width: "w-[77px]" },
  { label: "运动算例 1", width: "w-[108px] pr-2.5" },
];

function SheetTabs() {
  return (
    <div className="flex h-[21px] shrink-0 border-y border-[#808080] bg-[#f7f7f7]">
      <div className="flex pl-0.5">
        {pagerButtons.map((button) => (
          <button key={button.label} aria-label={button.label} className="flex w-5 items-center justify-center border border-[#74748c] bg-[#a9a9bf]">
            <svg viewBox="0 0 14 14" fill="#808099" stroke="#808099" aria-hidden="true" className="size-3.5"><path d={button.d} /></svg>
          </button>
        ))}
      </div>
      <div role="tablist" aria-label="视图标签" className="flex">
        {sheetTabs.map((tab, index) => (
          <button
            key={tab.label}
            role="tab"
            aria-selected={index === 0}
            className={clsx(
              "border-r border-[#808080] text-[17px] leading-[19px] whitespace-nowrap text-black",
              tab.width,
              index > 0 && "bg-[#d4d4d4]",
            )}
          >
            {tab.label}
          </button>
        ))}
      </div>
    </div>
  );
}

function StatusBar() {
  return (
    <footer className="flex h-[23px] shrink-0 items-stretch border-b-2 border-[#eadfdf] bg-[#f7f7f7] text-[15px] leading-[25px] whitespace-nowrap text-black">
      <span className="flex-1 pl-px text-base leading-[25px]">SOLIDWORKS Premium 2018 SP5.0</span>
      <span className="w-2 border-l border-[#ccc]" />
      <span className="w-[90px] border-x border-[#ccc] pl-1">在编辑 零件</span>
      <span className="w-[15px] border-r border-[#ccc]" />
      <button className="flex w-[178px] items-center gap-6 pt-1 pl-[37px]">
        自定义
        <svg viewBox="0 0 5 3" fill="#333" aria-hidden="true" className="h-[3px] w-[5px]"><path d="M0 3h5L2.500 0z" /></svg>
      </button>
      <Icon className="mr-1 size-[18px]">
        <path d="M1.500 5l4-3.500L18 5.500v6L12.500 18 2 10z" fill="#ddd" stroke="#333" strokeWidth="1.300" />
        <path d="M1.500 5L12 12l6-6M12 12l.5 6" stroke="#333" />
        <circle cx="8.500" cy="6" r="2" fill="#fff" stroke="#333" />
      </Icon>
    </footer>
  );
}

export default function App() {
  return (
    <div className="flex h-screen flex-col overflow-hidden bg-white font-['Open_Sans','Noto_Sans_CJK_SC',sans-serif]">
      <TitleBar />
      <Ribbon />
      <CommandTabs />
      <div className="flex min-h-0 flex-1">
        <FeaturePanel />
        <GraphicsArea />
      </div>
      <SheetTabs />
      <StatusBar />
    </div>
  );
}
